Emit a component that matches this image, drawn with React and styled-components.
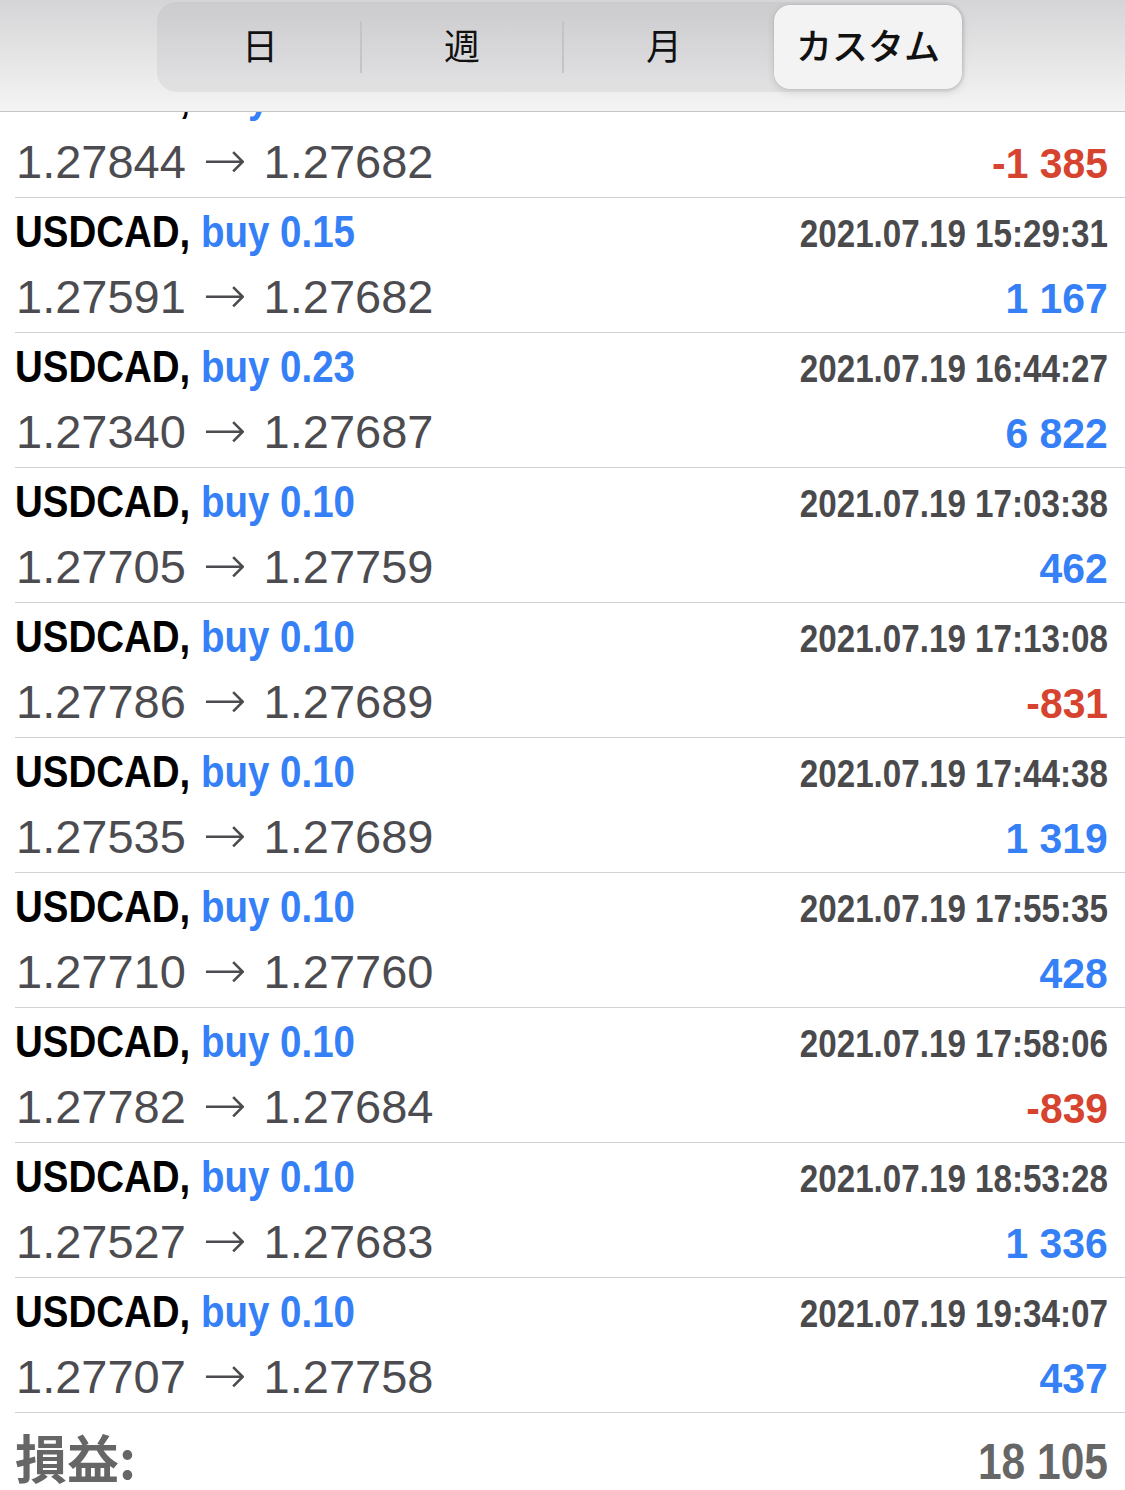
import styled, { createGlobalStyle } from "styled-components";

const GlobalStyle = createGlobalStyle`
  body {
    margin: 0;
    background: #ffffff;
    font-family: "Liberation Sans", Arial, sans-serif;
  }
`;

// no condensed Helvetica here, so bold figures are squeezed horizontally
const Condensed = styled.span`
  display: inline-block;
  font-weight: 700;
  transform: scaleX(${(p) => p.$sx});
  transform-origin: ${(p) => (p.$right ? "right" : "left")} center;
`;

const Page = styled.div`
  width: 1125px;
  height: 1490px;
  overflow: hidden;
  display: flex;
  flex-direction: column;
  background: #ffffff;
`;

const Header = styled.header`
  height: 112px;
  flex-shrink: 0;
  padding: 2px 0 0 157px;
  box-sizing: border-box;
  background: linear-gradient(#d5d5d7, #f4f4f4);
  border-bottom: 1px solid #c6c6c6;
  display: flex;
  align-items: flex-start;
`;

const Segmented = styled.div`
  width: 808px;
  height: 90px;
  border-radius: 20px;
  background: rgba(120, 120, 128, 0.1);
  display: flex;
  align-items: center;
  padding: 3px;
  box-sizing: border-box;
`;

const Segment = styled.div`
  flex: ${(p) => (p.$active ? "0 0 188px" : "1")};
  margin-left: ${(p) => (p.$active ? "8px" : "0")};
  height: 100%;
  box-sizing: border-box;
  padding-bottom: 6px;
  display: flex;
  align-items: center;
  justify-content: center;
  font-family: "Noto Sans CJK JP", sans-serif;
  font-size: 36px;
  font-weight: ${(p) => (p.$active ? 500 : 400)};
  color: #111111;
  border-radius: 16px;
  background: ${(p) => (p.$active ? "#f3f3f3" : "transparent")};
  box-shadow: ${(p) =>
    p.$active ? "0 3px 8px rgba(0,0,0,0.12), 0 0 0 1px rgba(0,0,0,0.04)" : "none"};
`;

const Divider = styled.div`
  width: 2px;
  height: 52px;
  background: ${(p) => (p.$hidden ? "transparent" : "#c4c4c6")};
`;

const Viewport = styled.div`
  flex: 1;
  overflow: hidden;
`;

const List = styled.div`
  margin-top: -49px;
`;

const Row = styled.div`
  height: 135px;
  box-sizing: border-box;
  margin-left: 15px;
  padding: 3px 17px 0 0;
  border-bottom: 1px solid #d2d2d4;
`;

const Line = styled.div`
  display: flex;
  justify-content: space-between;
  align-items: baseline;
  line-height: ${(p) => p.$h}px;
`;

const Symbol = styled(Condensed)`
  font-size: 45px;
  color: #000000;
`;

const Side = styled.span`
  color: #3580f6;
`;

const Time = styled(Condensed)`
  font-size: 38px;
  color: #4a4a4d;
`;

const Prices = styled.span`
  font-size: 47px;
  color: #4c4c50;
  padding-left: 1px;
`;

const Arrow = styled.span`
  font-family: "DejaVu Sans", sans-serif;
  font-size: 52px;
  font-weight: 200;
  line-height: 0;
  margin: 0 4px;
`;

const Profit = styled(Condensed)`
  font-size: 43px;
  color: ${(p) => (p.$loss ? "#d6432f" : "#3580f6")};
`;

const TotalRow = styled.div`
  display: flex;
  justify-content: space-between;
  align-items: baseline;
  padding: 13px 17px 0 15px;
  line-height: 62px;
`;

const TotalLabel = styled.span`
  font-family: "Noto Sans CJK JP", sans-serif;
  font-weight: 700;
  font-size: 52px;
  color: #666666;
`;

const TotalValue = styled(Condensed)`
  font-size: 50px;
  color: #666666;
`;

const trades = [
  { lot: "0.10", time: "2021.07.19 14:58:12", open: "1.27844", close: "1.27682", profit: "-1 385" },
  { lot: "0.15", time: "2021.07.19 15:29:31", open: "1.27591", close: "1.27682", profit: "1 167" },
  { lot: "0.23", time: "2021.07.19 16:44:27", open: "1.27340", close: "1.27687", profit: "6 822" },
  { lot: "0.10", time: "2021.07.19 17:03:38", open: "1.27705", close: "1.27759", profit: "462" },
  { lot: "0.10", time: "2021.07.19 17:13:08", open: "1.27786", close: "1.27689", profit: "-831" },
  { lot: "0.10", time: "2021.07.19 17:44:38", open: "1.27535", close: "1.27689", profit: "1 319" },
  { lot: "0.10", time: "2021.07.19 17:55:35", open: "1.27710", close: "1.27760", profit: "428" },
  { lot: "0.10", time: "2021.07.19 17:58:06", open: "1.27782", close: "1.27684", profit: "-839" },
  { lot: "0.10", time: "2021.07.19 18:53:28", open: "1.27527", close: "1.27683", profit: "1 336" },
  { lot: "0.10", time: "2021.07.19 19:34:07", open: "1.27707", close: "1.27758", profit: "437" },
];

const tabs = ["日", "週", "月", "カスタム"];
const activeTab = 3;

function App() {
  return (
    <Page>
      <GlobalStyle />
      <Header>
        <Segmented>
          {tabs.map((t, i) => [
            i > 0 && (
              <Divider key={"d" + i} $hidden={i === activeTab || i - 1 === activeTab} />
            ),
            <Segment key={t} $active={i === activeTab}>
              {t}
            </Segment>,
          ])}
        </Segmented>
      </Header>
      <Viewport>
        <List>
          {trades.map((t, i) => (
            <Row key={i}>
              <Line $h={62}>
                <Symbol $sx={0.855}>
                  USDCAD, <Side>buy {t.lot}</Side>
                </Symbol>
                <Time $sx={0.873} $right>
                  {t.time}
                </Time>
              </Line>
              <Line $h={63}>
                <Prices>
                  {t.open} <Arrow>→</Arrow> {t.close}
                </Prices>
                <Profit $sx={0.95} $right $loss={t.profit.startsWith("-")}>
                  {t.profit}
                </Profit>
              </Line>
            </Row>
          ))}
          <TotalRow>
            <TotalLabel>損益:</TotalLabel>
            <TotalValue $sx={0.85} $right>
              18 105
            </TotalValue>
          </TotalRow>
        </List>
      </Viewport>
    </Page>
  );
}

export default App;
